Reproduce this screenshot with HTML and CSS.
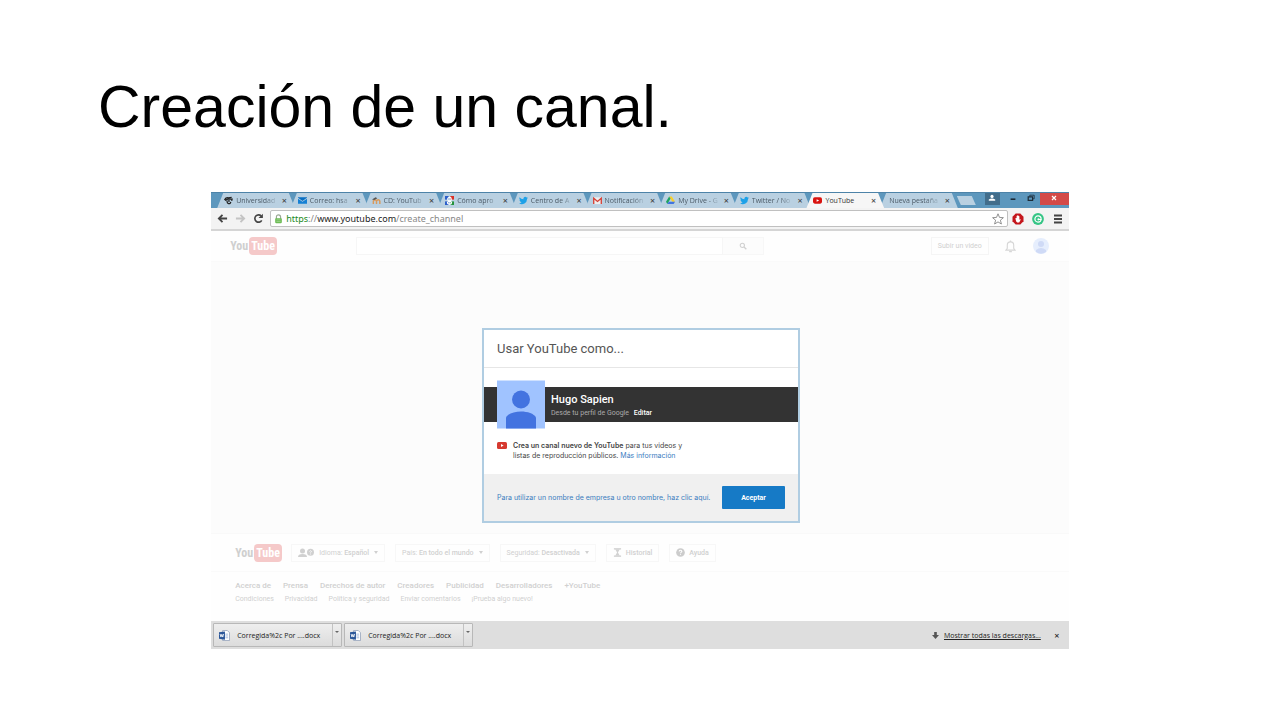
FILE: index.html
```html
<!DOCTYPE html>
<html lang="es">
  <head>
    <meta charset="UTF-8" />
    <meta name="viewport" content="width=device-width, initial-scale=1.0" />
    <title>Creación de un canal</title>
    <link rel="stylesheet" href="styles.css" />
  </head>
  <body>
    <h1 class="slide-title">Creación de un canal.</h1>

    <main class="browser">
      <!-- Tabs -->
      <header class="tab-strip">
        <nav class="tabs">
          <a href="#" class="tab">
            <svg class="fav" viewBox="0 0 10 10"><path d="M.5 4.500Q2 1.500 5 2L8.500 1.500M1 5l3-1.500L9 3.500 8.500 5.500M3.500 5Q3 8 5 8.500T7.500 6.500" fill="none" stroke="#222" stroke-width="1.400" /><circle cx="5.500" cy="5.500" r="1" fill="#222" /></svg>
            <span class="tab-name">Universidad</span><span class="tab-x">×</span>
          </a>
          <a href="#" class="tab">
            <svg class="fav" viewBox="0 0 10 10"><path d="M0 2l5 3.500L10 2v-.5H0z" fill="#0a6fc2" /><path d="M0 3l5 3.500L10 3v5.500H0z" fill="#1580d4" /></svg>
            <span class="tab-name">Correo: hsa</span><span class="tab-x">×</span>
          </a>
          <a href="#" class="tab">
            <svg class="fav" viewBox="0 0 10 10"><path d="M1.500 9V5.500Q3.500 3 5 5.500V9M5 5.500Q7.500 3 8.700 5.500V9" fill="none" stroke="#d99a5b" stroke-width="1.600" /><path d="M0 4l4-2.500 2 1-3.500 2z" fill="#555" /></svg>
            <span class="tab-name">CD: YouTub</span><span class="tab-x">×</span>
          </a>
          <a href="#" class="tab">
            <svg class="fav" viewBox="0 0 10 10"><path d="M0 0h4v4H0z" fill="#2c5fc9" /><path d="M6 0h4v4H6z" fill="#d93025" /><path d="M0 6h4v4H0z" fill="#2c5fc9" /><path d="M6 6h4v4H6z" fill="#23923d" /><circle cx="5" cy="3.500" r="2" fill="none" stroke="#fff" stroke-width="1.300" /><ellipse cx="5" cy="7.500" rx="2.300" ry="1.500" fill="none" stroke="#fff" stroke-width="1.300" /></svg>
            <span class="tab-name">Cómo apro</span><span class="tab-x">×</span>
          </a>
          <a href="#" class="tab">
            <svg class="fav" viewBox="0 0 24 24"><use href="#bird" /></svg>
            <span class="tab-name">Centro de A</span><span class="tab-x">×</span>
          </a>
          <a href="#" class="tab">
            <svg class="fav" viewBox="0 0 10 10"><path d="M0 1.500h10V9H0z" fill="#eee" /><path d="M.8 9V2.500L5 6l4.200-3.500V9" fill="none" stroke="#d54036" stroke-width="1.500" /></svg>
            <span class="tab-name">Notificación</span><span class="tab-x">×</span>
          </a>
          <a href="#" class="tab">
            <svg class="fav" viewBox="0 0 10 10"><path d="M3.500.5h3l3.500 6H7z" fill="#f8cf2c" /><path d="M3.500.5L0 6.500 1.500 9 5 3z" fill="#1da462" /><path d="M3 6.500h7L8.500 9h-7z" fill="#4175df" /></svg>
            <span class="tab-name">My Drive - G</span><span class="tab-x">×</span>
          </a>
          <a href="#" class="tab">
            <svg class="fav" viewBox="0 0 24 24"><use href="#bird" /></svg>
            <span class="tab-name">Twitter / No</span><span class="tab-x">×</span>
          </a>
          <a href="#" class="tab active">
            <svg class="fav" viewBox="0 0 10 10"><rect y="1.500" width="10" height="7" rx="2" fill="#d9130f" /><path d="M4 3.500v3L6.800 5z" fill="#fff" /></svg>
            <span class="tab-name">YouTube</span><span class="tab-x">×</span>
          </a>
          <a href="#" class="tab plain">
            <span class="tab-name">Nueva pestaña</span><span class="tab-x">×</span>
          </a>
        </nav>
        <button class="new-tab" aria-label="Nueva pestaña"></button>
        <div class="window-buttons">
          <button class="user" aria-label="Usuario">
            <svg viewBox="0 0 10 10"><circle cx="5" cy="3" r="2" fill="#fff" /><path d="M1 8.500V7q4-3 8 0v1.500z" fill="#fff" /></svg>
          </button>
          <button aria-label="Minimizar">
            <svg viewBox="0 0 10 10"><path d="M2 6.500h6" stroke="#1d2c38" stroke-width="2" /></svg>
          </button>
          <button aria-label="Restaurar">
            <svg viewBox="0 0 10 10"><path d="M3.500 3V1.500H9V6H7.500" fill="none" stroke="#1d2c38" /><path d="M1.500 3.500h5.500V8H1.500z" fill="none" stroke="#1d2c38" stroke-width="1.500" /></svg>
          </button>
          <button class="close" aria-label="Cerrar">
            <svg viewBox="0 0 10 10"><path d="M2.500 2.500l5 5m0-5l-5 5" stroke="#fff" stroke-width="1.500" /></svg>
          </button>
        </div>
      </header>

      <!-- Address bar -->
      <div class="toolbar">
        <button aria-label="Atrás">
          <svg viewBox="0 0 12 12"><path d="M11 6H2.500M6 2L2 6l4 4" fill="none" stroke="#444" stroke-width="2" /></svg>
        </button>
        <button aria-label="Adelante">
          <svg viewBox="0 0 12 12"><path d="M1 6h8.500M6 2l4 4-4 4" fill="none" stroke="#c4c4c4" stroke-width="2" /></svg>
        </button>
        <button aria-label="Recargar">
          <svg viewBox="0 0 12 12"><path d="M9.500 8A4 4 0 1 1 9 3.300" fill="none" stroke="#444" stroke-width="1.800" /><path d="M10.800.8v4.700H6z" fill="#444" /></svg>
        </button>
        <div class="address">
          <svg class="lock" viewBox="0 0 10 12"><path d="M2.500 6V3.500a2.500 2.500 0 0 1 5 0V6" fill="none" stroke="#9aa895" stroke-width="1.400" /><rect x="1" y="5" width="8" height="6" rx="1" fill="#6dbb55" /><path d="M2.500 7h5M2.500 9h5" stroke="#a8d99a" stroke-width=".8" /></svg>
          <p class="url"><span class="scheme">https</span><span class="slashes">://</span>www.youtube.com<span class="path">/create_channel</span></p>
          <svg class="star" viewBox="0 0 12 12"><path d="M6 .8l1.500 3.600 3.900.3-3 2.500 1 3.800L6 8.900 2.600 11l1-3.800-3-2.500 3.900-.3z" fill="#fff" stroke="#777" stroke-width=".8" /></svg>
        </div>
        <button class="ext" aria-label="Bloqueador">
          <svg viewBox="0 0 12 12"><path d="M3.700.5h4.600l3.200 3.200v4.600l-3.200 3.200H3.700L.5 8.300V3.700z" fill="#c4161c" /><path d="M3.300 5.300l.9 3.300 1 1h2l1.600-3-.7-.3-.7.5V3.300l-.8-.3-.5-.8-.7.3-.8.5v2z" fill="#fff" /></svg>
        </button>
        <button class="ext" aria-label="Extensión">
          <svg viewBox="0 0 12 12"><circle cx="6" cy="6" r="5.900" fill="#35c585" /><circle cx="6" cy="6" r="3.100" fill="none" stroke="#fff" stroke-width="1.200" /><circle cx="6.500" cy="6.300" r="1.100" fill="#fff" /><path d="M6.500 6.500h3" fill="none" stroke="#fff" /></svg>
        </button>
        <button class="ext" aria-label="Menú">
          <svg viewBox="0 0 12 12"><path d="M2 2.500h8M2 6h8M2 9.500h8" stroke="#444" stroke-width="2" /></svg>
        </button>
      </div>

      <!-- Page header -->
      <div class="masthead">
        <a href="#" class="logo">You<span>Tube</span></a>
        <form class="search">
          <input type="text" aria-label="Buscar" />
          <button type="button" aria-label="Buscar">
            <svg viewBox="0 0 12 12"><circle cx="5" cy="5" r="3.200" fill="none" stroke="#d0d0d0" stroke-width="1.600" /><path d="M7.500 7.500L11 11" stroke="#d0d0d0" stroke-width="2" /></svg>
          </button>
        </form>
        <button class="upload">Subir un video</button>
        <svg class="bell" viewBox="0 0 12 14"><path d="M1 11h10L9.500 9V5.500a3.500 3.500 0 0 0-7 0V9z" fill="none" stroke="#d6d6d6" stroke-width="1.200" /><path d="M6 2V.5M4.500 12.500h3" stroke="#d6d6d6" stroke-width="1.400" /></svg>
        <svg class="account" viewBox="0 0 16 16"><circle cx="8" cy="8" r="8" fill="#e6eefd" /><circle cx="8" cy="6" r="3" fill="#cfdaf6" /><path d="M3 14v-2q5-4 10 0v2q-5 3.500-10 0z" fill="#cfdaf6" /></svg>
      </div>

      <!-- Channel dialog -->
      <div class="stage">
        <section class="dialog">
          <h2>Usar YouTube como...</h2>
          <div class="identity">
            <svg class="avatar" viewBox="0 0 48 48"><path d="M0 0h48v48H0z" fill="#a0c3ff" /><circle cx="24" cy="19" r="9" fill="#4373e0" /><path d="M9 48V37c4-8 26-8 30 0v11z" fill="#4373e0" /></svg>
            <div class="band">
              <strong>Hugo Sapien</strong>
              <p>Desde tu perfil de Google <a href="#">Editar</a></p>
            </div>
          </div>
          <div class="note">
            <svg viewBox="0 0 10 7"><rect width="10" height="7" rx="1.500" fill="#d63a30" /><path d="M4 2v3l2.600-1.500z" fill="#fff" /></svg>
            <p>
              <b>Crea un canal nuevo de YouTube</b> para tus videos y<br />
              listas de reproducción públicos. <a href="#">Más información</a>
            </p>
          </div>
          <div class="actions">
            <a href="#">Para utilizar un nombre de empresa u otro nombre, haz clic aquí.</a>
            <button>Aceptar</button>
          </div>
        </section>
      </div>

      <!-- Page footer -->
      <footer class="footer">
        <div class="options">
          <a href="#" class="logo">You<span>Tube</span></a>
          <button>
            <svg class="lang" viewBox="0 0 16 10"><circle cx="4.500" cy="3" r="2.500" fill="#d0d0d0" /><path d="M0 9q0-3 4.500-3T9 9z" fill="#d0d0d0" /><circle cx="12.500" cy="4.200" r="3.500" fill="#d0d0d0" /><path d="M11.500 3.500q1-1.500 2 0l-1 1.200M12.500 5.500v1" fill="none" stroke="#fff" stroke-width=".8" /></svg>
            <span>Idioma: <b>Español</b></span><i class="caret"></i>
          </button>
          <button><span>País: <b>En todo el mundo</b></span><i class="caret"></i></button>
          <button><span>Seguridad: <b>Desactivada</b></span><i class="caret"></i></button>
          <button class="short">
            <svg viewBox="0 0 10 10"><path d="M1 1h8M1 9h8" stroke="#ccc" stroke-width="1.500" /><path d="M2.500 1.500h5L5.500 5l2 3.500h-5L4.500 5z" fill="#d2d2d2" /></svg>
            <b>Historial</b>
          </button>
          <button class="short">
            <svg viewBox="0 0 10 10"><circle cx="5" cy="5" r="4.800" fill="#ccc" /><path d="M3.500 4q0-1.500 1.500-1.500T6.500 4L5 5.500M5 6.500v1" fill="none" stroke="#fff" stroke-width="1.200" /></svg>
            <b>Ayuda</b>
          </button>
        </div>
        <nav class="links">
          <a href="#">Acerca de</a>
          <a href="#">Prensa</a>
          <a href="#">Derechos de autor</a>
          <a href="#">Creadores</a>
          <a href="#">Publicidad</a>
          <a href="#">Desarrolladores</a>
          <a href="#">+YouTube</a>
        </nav>
        <nav class="links small">
          <a href="#">Condiciones</a>
          <a href="#">Privacidad</a>
          <a href="#">Política y seguridad</a>
          <a href="#">Enviar comentarios</a>
          <a href="#">¡Prueba algo nuevo!</a>
        </nav>
      </footer>

      <!-- Downloads -->
      <div class="downloads">
        <div class="download">
          <button class="file"><svg viewBox="0 0 12 12"><use href="#word" /></svg>Corregida%2c Por ....docx</button>
          <button class="more" aria-label="Opciones"><i class="caret"></i></button>
        </div>
        <div class="download">
          <button class="file"><svg viewBox="0 0 12 12"><use href="#word" /></svg>Corregida%2c Por ....docx</button>
          <button class="more" aria-label="Opciones"><i class="caret"></i></button>
        </div>
        <svg class="arrow" viewBox="0 0 8 8"><path d="M2.500 0h3v3.500H8L4 8 0 3.500h2.500z" fill="#555" /></svg>
        <a href="#" class="show-all">Mostrar todas las descargas...</a>
        <button class="dismiss" aria-label="Cerrar">×</button>
      </div>
    </main>

    <!-- Shared icons -->
    <svg class="defs" width="0" height="0">
      <symbol id="bird" viewBox="0 0 24 24">
        <path fill="#1da1e8" d="M24 4.600c-.9.400-1.800.7-2.800.8 1-.6 1.800-1.600 2.200-2.700-1 .6-2 1-3.100 1.200A4.900 4.900 0 0 0 11.900 8.400C7.700 8.200 4.100 6.300 1.700 3.200a4.900 4.900 0 0 0 1.500 6.500c-.8 0-1.600-.2-2.200-.6a4.900 4.900 0 0 0 3.900 4.900c-.7.200-1.500.2-2.200.1a4.900 4.900 0 0 0 4.600 3.400A9.900 9.900 0 0 1 0 19.500a14 14 0 0 0 21.500-12.400c1-.7 1.800-1.600 2.500-2.500z" />
      </symbol>
      <symbol id="word" viewBox="0 0 12 12">
        <path d="M4 .5h5L11.500 3v8.500H4z" fill="#fff" stroke="#8a9ab5" stroke-width=".8" />
        <path d="M7 4.500h3M7 6.500h3M7 8.500h3" stroke="#8aa4d0" stroke-width=".8" />
        <path d="M0 2.500l6.500-1v9L0 9.500z" fill="#2a5699" />
        <path d="M1.200 4.300l.9 3.400 1-3 1 3 .9-3.400" fill="none" stroke="#fff" stroke-width=".9" />
      </symbol>
    </svg>
  </body>
</html>
```
FILE: styles.css
```css
* {
  margin: 0;
  padding: 0;
  box-sizing: border-box;
}

body {
  background: #fff;
  font-family: Roboto, Arial, sans-serif;
}

a {
  text-decoration: none;
}

button {
  border: 0;
  background: none;
  font: inherit;
  color: inherit;
}

svg {
  display: block;
  flex: none;
}

.defs {
  position: absolute;
}

.slide-title {
  padding: 73px 98px 51px;
  font: 400 59px/68px "Liberation Sans", Arial, sans-serif;
  color: #000;
}

.browser {
  width: 67%;
  margin: 0 auto;
  background: #fdfdfd;
}

/* Tab strip */
.tab-strip {
  display: flex;
  height: 16px;
  padding-left: 6px;
  background: #5d97bd;
  border-top: 1px solid #4d83a8;
  font-family: "Open Sans", "Noto Sans", sans-serif;
  font-size: 7px;
  color: #4c5a66;
}

.tabs {
  flex: 1;
  display: grid;
  grid-template-columns: repeat(10, 1fr);
}

.tab {
  position: relative;
  z-index: 0;
  display: flex;
  align-items: center;
  min-width: 0;
  padding-left: 7px;
  line-height: 14px;
  color: inherit;
}

.tab::before {
  content: "";
  position: absolute;
  inset: 0 -4px 0 0;
  z-index: -1;
  background: #b9d0e1;
  clip-path: polygon(0 100%, 6px 0, calc(100% - 6px) 0, 100% 100%);
}

.tab.active {
  z-index: 1;
  color: #333;
}

.tab.active::before {
  background: #f6f6f6;
}

.tab.plain {
  padding-left: 9px;
}

.fav {
  width: 9px;
  height: 9px;
  margin-right: 3px;
}

.tab-name {
  flex: 1;
  white-space: nowrap;
  mask-image: linear-gradient(to right, #000 70%, transparent);
}

.active .tab-name {
  mask-image: none;
}

.tab-x {
  width: 13px;
  text-align: center;
  font-size: 9px;
  line-height: 12px;
  font-weight: 600;
  color: #444;
}

.new-tab {
  width: 19px;
  height: 9px;
  margin: 3px 9px 0 3px;
  background: #b9d0e1;
  clip-path: polygon(0 0, 15px 0, 100% 100%, 4px 100%);
}

.window-buttons {
  display: flex;
  height: 12px;
}

.window-buttons button {
  display: grid;
  justify-items: center;
  padding-top: 1px;
  width: 18px;
}

.window-buttons svg {
  width: 8px;
  height: 8px;
}

.window-buttons .user {
  width: 15px;
  margin-right: 4px;
  background: #426d8b;
}

.window-buttons .close {
  width: 29px;
  background: #d34a48;
}

/* Address bar */
.toolbar {
  display: flex;
  align-items: center;
  height: 23px;
  padding: 0 1px 0 2px;
  background: #f3f3f3;
  border-bottom: 2px solid #d5d5d5;
}

.toolbar button {
  width: 18px;
}

.toolbar button svg {
  width: 11px;
  height: 11px;
  margin: 0 auto;
}

.toolbar .ext {
  width: 20px;
}

.toolbar .ext svg {
  width: 12px;
  height: 12px;
}

.address {
  flex: 1;
  display: flex;
  align-items: center;
  gap: 3px;
  height: 17px;
  margin-left: 3px;
  padding: 0 3px;
  background: #fff;
  border: 1px solid #c0c0c0;
  border-radius: 2px;
}

.lock {
  width: 9px;
  height: 10px;
}

.url {
  flex: 1;
  font-family: "Noto Sans", "Open Sans", sans-serif;
  font-size: 9px;
  line-height: 14px;
  color: #222;
}

.scheme {
  color: #1c8a1c;
}

.slashes,
.path {
  color: #888;
}

.star {
  width: 12px;
  height: 12px;
}

/* Page header */
.masthead {
  display: flex;
  align-items: center;
  height: 31px;
  padding: 0 20px 0 19px;
  background: #fefefe;
  border-bottom: 1px solid #fafafa;
}

.logo {
  display: flex;
  align-items: center;
  gap: 1px;
  width: 46px;
  flex: none;
  font: 700 12px/18px "Roboto Condensed", "Liberation Sans Narrow", "Open Sans Condensed", Roboto, sans-serif;
  color: #cfcfcf;
}

.logo span {
  padding: 0 2px;
  border-radius: 4px;
  background: #f5c9c9;
  color: #fff;
}

.search {
  flex: 1;
  display: flex;
  max-width: 408px;
  margin-left: 80px;
  height: 18px;
}

.search input {
  flex: 1;
  min-width: 0;
  border: 1px solid #f6f6f6;
  background: #fff;
}

.search button {
  display: grid;
  place-items: center;
  width: 41px;
  border: 1px solid #f7f7f7;
  border-left: 0;
  background: #fcfcfc;
}

.search svg {
  width: 8px;
  height: 8px;
}

.upload {
  margin-left: auto;
  width: 58px;
  height: 18px;
  border: 1px solid #f5f5f5;
  font-size: 7px;
  color: #d0d0d0;
}

.bell {
  width: 11px;
  height: 13px;
  margin: 0 17px 0 16px;
}

.account {
  width: 16px;
  height: 16px;
}

/* Dialog */
.stage {
  padding: 66px 0 10px 2px;
  background: #fcfcfc;
}

.dialog {
  width: 318px;
  margin: 0 auto;
  border: 2px solid #b0cde2;
  background: #fff;
}

.dialog h2 {
  padding: 0 13px;
  border-bottom: 1px solid #e6e6e6;
  font-size: 13px;
  font-weight: 400;
  line-height: 37px;
  color: #555;
}

.dialog a {
  color: #3b7dbf;
}

.identity {
  display: flex;
  align-items: center;
  margin-top: 12px;
  padding-left: 13px;
  background: linear-gradient(#333, #333) 0 7px / 100% 35px no-repeat;
}

.avatar {
  width: 48px;
  height: 49px;
}

.band {
  padding: 2px 0 0 6px;
  font-size: 7px;
  line-height: 12px;
  color: #aaa;
}

.band strong {
  display: block;
  font-size: 11px;
  line-height: 14px;
  font-weight: 500;
  color: #fff;
}

.dialog .band a {
  margin-left: 3px;
  font-weight: 500;
  color: #fff;
}

.note {
  display: flex;
  gap: 6px;
  padding: 12px 13px 13px;
  font-family: Inter, Roboto, sans-serif;
  font-size: 7px;
  line-height: 10px;
  color: #444;
}

.note svg {
  width: 10px;
  height: 7px;
  margin-top: 1px;
}

.note b {
  font-weight: 600;
}

.actions {
  display: flex;
  align-items: center;
  justify-content: space-between;
  height: 47px;
  padding: 0 13px;
  background: #f0f0f0;
  font-size: 7px;
}

.actions a {
  font-family: Inter, Roboto, sans-serif;
}

.actions button {
  width: 63px;
  height: 23px;
  border-radius: 1px;
  background: #167ac6;
  font-weight: 700;
  color: #fff;
}

/* Page footer */
.footer {
  height: 88px;
  border-top: 1px solid #f9f9f9;
  background: #fefefe;
  color: #d0d0d0;
}

.options {
  display: flex;
  align-items: center;
  gap: 10px;
  height: 38px;
  padding-left: 24px;
  border-bottom: 1px solid #fafafa;
}

.options button {
  display: flex;
  align-items: center;
  gap: 5px;
  height: 18px;
  padding: 0 6px;
  border: 1px solid #f7f7f7;
  font-size: 7px;
  white-space: nowrap;
}

.options .short {
  gap: 4px;
}

.options b {
  font-weight: 500;
}

.options svg {
  width: 9px;
  height: 9px;
}

.options .lang {
  width: 16px;
  height: 10px;
}

.caret {
  border: 2px solid transparent;
  border-top: 3px solid currentColor;
  border-bottom: 0;
}

.links {
  display: flex;
  gap: 12px;
  padding: 8px 24px 0;
  font-size: 8px;
  line-height: 12px;
  font-weight: 500;
}

.links a {
  color: #d0d0d0;
}

.links.small {
  gap: 11px;
  padding-top: 1px;
  font-size: 7px;
  font-weight: 400;
}

/* Downloads */
.downloads {
  display: flex;
  align-items: center;
  height: 28px;
  padding: 0 8px 0 2px;
  background: #dedede;
  font-family: "Open Sans", "Noto Sans", sans-serif;
  font-size: 7px;
  color: #222;
}

.download {
  display: flex;
  width: 129px;
  height: 24px;
  margin-right: 2px;
  border: 1px solid #b8b8b8;
  border-radius: 1px;
  background: linear-gradient(#eee, #dcdcdc);
}

.file {
  flex: 1;
  display: flex;
  align-items: center;
  gap: 7px;
  padding-left: 5px;
  white-space: nowrap;
}

.file svg {
  width: 11px;
  height: 11px;
}

.more {
  display: flex;
  justify-content: center;
  width: 9px;
  padding-top: 7px;
  border-left: 1px solid #c2c2c2;
  color: #666;
}

.more .caret {
  border-top-width: 2px;
}

.arrow {
  width: 7px;
  height: 7px;
  margin: 0 5px 0 auto;
}

.show-all {
  color: #222;
  text-decoration: underline;
}

.dismiss {
  width: 8px;
  margin-left: 12px;
  font-size: 9px;
  font-weight: 600;
}
```
